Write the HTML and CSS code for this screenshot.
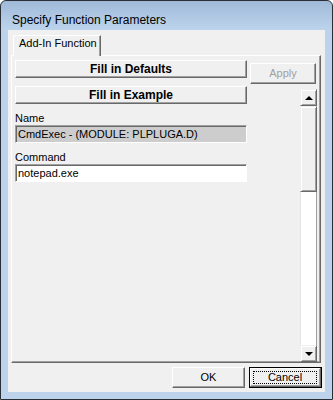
FILE: index.html
```html
<!DOCTYPE html>
<html>
<head>
<meta charset="utf-8">
<link rel="stylesheet" href="styles.css">
</head>
<body>
<div class="window">
  <div class="titlebar"><span class="title">Specify Function Parameters</span></div>
  <div class="client">
    <div class="tabs"><div class="tab">Add-In Function</div></div>
    <div class="panel">
      <div class="row-top">
        <div class="btn btn-wide bold">Fill in Defaults</div>
        <div class="btn btn-apply disabled">Apply</div>
      </div>
      <div class="scroll-area">
        <div class="form">
          <div class="btn btn-wide bold">Fill in Example</div>
          <div class="lbl first">Name</div>
          <div class="field readonly">CmdExec - (MODULE: PLPLUGA.D)</div>
          <div class="lbl">Command</div>
          <div class="field">notepad.exe</div>
        </div>
        <div class="scrollbar">
          <div class="sb-btn"><span class="arrow-up"></span></div>
          <div class="sb-thumb"></div>
          <div class="sb-track"></div>
          <div class="sb-btn"><span class="arrow-down"></span></div>
        </div>
      </div>
    </div>
    <div class="footer">
      <div class="btn btn-foot">OK</div>
      <div class="btn btn-foot default"><span class="focus">Cancel</span></div>
    </div>
  </div>
</div>
</body>
</html>
```

FILE: styles.css
```css
html, body {
  margin: 0;
  padding: 0;
  background: #ffffff;
}

.window {
  box-sizing: border-box;
  width: 333px;
  height: 400px;
  border: 1px solid #2a2f36;
  border-radius: 6px 6px 0 0;
  background: linear-gradient(#9fb9d8 0px, #b2cae5 18px, #bcd3eb 29px, #bcd3eb 100%);
  padding: 0 7px 7px 7px;
  display: flex;
  flex-direction: column;
}

.titlebar {
  height: 29px;
  box-sizing: border-box;
  padding: 12px 0 0 4px;
  font-family: "Liberation Sans", Arial, sans-serif;
  font-size: 12px;
  line-height: 14px;
  color: #000;
}

.client {
  width: 317px;
  height: 362px;
  box-sizing: border-box;
  background: #f0f0f0;
  display: flex;
  flex-direction: column;
  font-family: "Liberation Sans", Arial, sans-serif;
  font-size: 11px;
  color: #000;
}

.tabs {
  display: flex;
  padding: 5px 0 0 5px;
  position: relative;
  z-index: 1;
  margin-bottom: -1px;
}

.tab {
  box-sizing: border-box;
  width: 88px;
  height: 21px;
  padding: 1px 0 0 5px;
  line-height: 13px;
  background: #f0f0f0;
  border-top: 1px solid #ffffff;
  border-left: 1px solid #ffffff;
  border-right: 1px solid #696969;
  box-shadow: inset -1px 0 0 #a0a0a0;
  border-top-left-radius: 2px;
}

.panel {
  box-sizing: border-box;
  margin-left: 3px;
  width: 310px;
  height: 308px;
  border: 1px solid;
  border-color: #ffffff #696969 #696969 #ffffff;
  box-shadow: inset -1px -1px 0 #a0a0a0;
  padding: 4px 3px 0 3px;
  display: flex;
  flex-direction: column;
}

.row-top {
  display: flex;
  align-items: flex-start;
  height: 24px;
}

.btn {
  box-sizing: border-box;
  display: flex;
  align-items: center;
  justify-content: center;
  background: #f0f0f0;
  border: 1px solid;
  border-color: #ffffff #696969 #696969 #ffffff;
  box-shadow: inset -1px -1px 0 #a0a0a0;
  line-height: 13px;
  white-space: nowrap;
}

.bold {
  font-weight: bold;
  font-size: 12px;
}

.btn-wide {
  width: 232px;
  height: 18px;
}

.btn-apply {
  width: 66px;
  height: 21px;
  margin-top: 3px;
  margin-left: 3px;
}

.disabled {
  color: #a0a0a0;
}

.scroll-area {
  margin-top: 2px;
  flex: 1;
  display: flex;
}

.form {
  width: 232px;
  display: flex;
  flex-direction: column;
}

.lbl {
  line-height: 13px;
  margin-top: 8px;
}

.field {
  box-sizing: border-box;
  width: 232px;
  height: 18px;
  border: 1px solid;
  border-color: #a0a0a0 #ffffff #ffffff #a0a0a0;
  box-shadow: inset 1px 1px 0 #696969;
  background: #ffffff;
  padding: 1px 0 0 2px;
  line-height: 14px;
  white-space: nowrap;
  overflow: hidden;
}

.field.readonly {
  background: #cdcdcd;
}

.scrollbar {
  margin-left: auto;
  margin-top: 3px;
  width: 17px;
  display: flex;
  flex-direction: column;
}

.sb-btn {
  box-sizing: border-box;
  width: 17px;
  height: 17px;
  background: #f0f0f0;
  border: 1px solid;
  border-color: #f0f0f0 #696969 #696969 #f0f0f0;
  box-shadow: inset 1px 1px 0 #ffffff, inset -1px -1px 0 #a0a0a0;
  display: flex;
  align-items: center;
  justify-content: center;
}

.arrow-up {
  width: 0;
  height: 0;
  border-left: 4px solid transparent;
  border-right: 4px solid transparent;
  border-bottom: 4px solid #000;
}

.arrow-down {
  width: 0;
  height: 0;
  border-left: 4px solid transparent;
  border-right: 4px solid transparent;
  border-top: 4px solid #000;
}

.sb-thumb {
  box-sizing: border-box;
  height: 86px;
  background: #f0f0f0;
  border: 1px solid;
  border-color: #f0f0f0 #696969 #696969 #f0f0f0;
  box-shadow: inset 1px 1px 0 #ffffff, inset -1px -1px 0 #a0a0a0;
}

.sb-track {
  flex: 1;
  box-sizing: border-box;
  background: #ffffff;
  border-left: 1px solid #e3e3e3;
  border-right: 1px solid #a0a0a0;
}

.footer {
  display: flex;
  justify-content: flex-end;
  gap: 4px;
  padding-right: 3px;
  margin-top: 4px;
}

.btn-foot {
  width: 73px;
  height: 21px;
}

.btn-foot.default {
  border: 1px solid #000000;
  box-shadow: inset -1px -1px 0 #696969, inset 1px 1px 0 #ffffff, inset -2px -2px 0 #a0a0a0;
  align-items: stretch;
  justify-content: stretch;
}

.focus {
  flex: 1;
  margin: 3px 4px 3px 3px;
  border: 1px dotted #000000;
  display: flex;
  align-items: center;
  justify-content: center;
  line-height: 13px;
}
```
